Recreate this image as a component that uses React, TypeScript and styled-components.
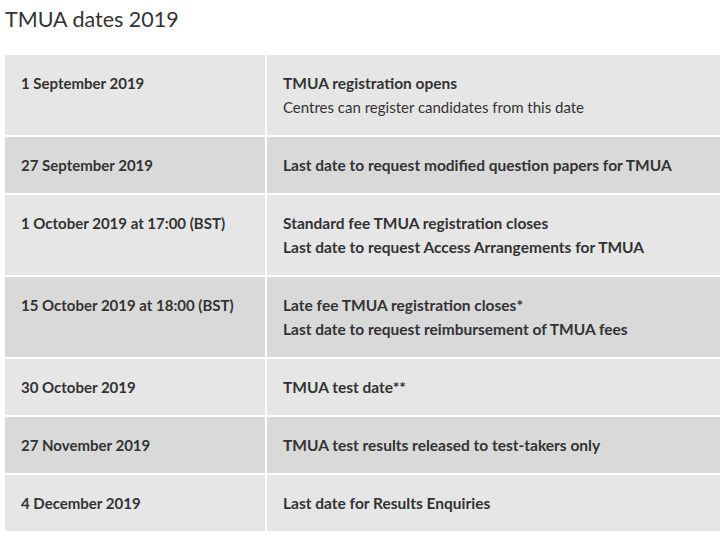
import React from "react";
import styled, { createGlobalStyle } from "styled-components";

const Global = createGlobalStyle`
  html, body { margin: 0; padding: 0; background: #ffffff; }
  body { font-family: Lato, "Open Sans", sans-serif; color: #333333; }
`;

const Page = styled.div`
  padding: 0 6px 0 5px;
`;

const Title = styled.h2`
  margin: 0;
  padding: 5px 0 0 0;
  height: 55px;
  box-sizing: border-box;
  font-family: Lato, sans-serif;
  font-weight: 400;
  font-size: 21.5px;
  line-height: 28px;
  color: #333333;
`;

const Grid = styled.div`
  display: grid;
  grid-template-columns: 260px 1fr;
  gap: 2px;
`;

const Cell = styled.div<{ $shade: boolean; $wide?: boolean }>`
  background: ${(p) => (p.$shade ? "#d9d9d9" : "#e6e6e6")};
  padding: 16px 16px;
  font-size: ${(p) => (p.$wide ? "15.5px" : "15px")};
  line-height: 24px;
  color: #333333;
`;

const Strong = styled.div`
  font-weight: 700;
`;

const Plain = styled.div`
  font-weight: 400;
  font-size: 15px;
`;

type Row = { date: string; lines: { text: string; bold: boolean }[] };

const rows: Row[] = [
  {
    date: "1 September 2019",
    lines: [
      { text: "TMUA registration opens", bold: true },
      { text: "Centres can register candidates from this date", bold: false },
    ],
  },
  {
    date: "27 September 2019",
    lines: [{ text: "Last date to request modified question papers for TMUA", bold: true }],
  },
  {
    date: "1 October 2019 at 17:00 (BST)",
    lines: [
      { text: "Standard fee TMUA registration closes", bold: true },
      { text: "Last date to request Access Arrangements for TMUA", bold: true },
    ],
  },
  {
    date: "15 October 2019 at 18:00 (BST)",
    lines: [
      { text: "Late fee TMUA registration closes*", bold: true },
      { text: "Last date to request reimbursement of TMUA fees", bold: true },
    ],
  },
  { date: "30 October 2019", lines: [{ text: "TMUA test date**", bold: true }] },
  {
    date: "27 November 2019",
    lines: [{ text: "TMUA test results released to test-takers only", bold: true }],
  },
  { date: "4 December 2019", lines: [{ text: "Last date for Results Enquiries", bold: true }] },
];

export default function App() {
  return (
    <>
      <Global />
      <Page>
        <Title>TMUA dates 2019</Title>
        <Grid>
          {rows.map((r, i) => (
            <React.Fragment key={i}>
              <Cell $shade={i % 2 === 1}>
                <Strong>{r.date}</Strong>
              </Cell>
              <Cell $shade={i % 2 === 1} $wide>
                {r.lines.map((l, j) =>
                  l.bold ? <Strong key={j}>{l.text}</Strong> : <Plain key={j}>{l.text}</Plain>
                )}
              </Cell>
            </React.Fragment>
          ))}
        </Grid>
      </Page>
    </>
  );
}
